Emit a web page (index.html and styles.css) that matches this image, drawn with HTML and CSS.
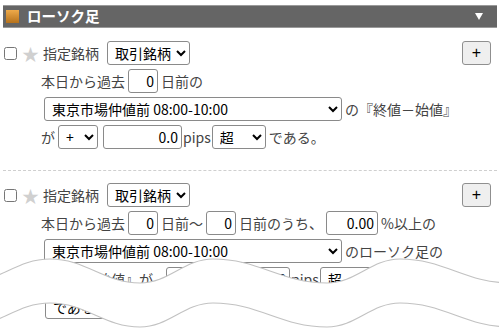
FILE: index.html
```html
<!DOCTYPE html>
<html lang="ja">
<head>
    <meta charset="UTF-8">
    <title>ローソク足</title>
    <link rel="stylesheet" href="styles.css">
</head>
<body>
    <div class="panel">
        <div class="panel-head">
            <span class="head-icon"></span>
            <h2>ローソク足</h2>
            <span class="head-toggle"></span>
        </div>

        <!-- rule 1 -->
        <div class="rule">
            <div class="row">
                <input type="checkbox" class="rule-check">
                <span class="star">★</span>
                <span class="label">指定銘柄</span>
                <select class="sel-symbol"><option>取引銘柄</option></select>
                <button class="add-btn">+</button>
            </div>
            <div class="row sub">
                <span>本日から過去</span>
                <input class="num w-days" value="0">
                <span>日前の</span>
            </div>
            <div class="row sub">
                <select class="sel-session"><option>東京市場仲値前 08:00-10:00</option></select>
                <span>の『終値－始値』</span>
            </div>
            <div class="row sub">
                <span>が</span>
                <select class="sel-sign"><option>+</option></select>
                <input class="num w-pips" value="0.0">
                <span class="unit">pips</span>
                <select class="sel-cmp"><option>超</option></select>
                <span>である。</span>
            </div>
        </div>

        <!-- rule 2 -->
        <div class="rule">
            <div class="row">
                <input type="checkbox" class="rule-check">
                <span class="star">★</span>
                <span class="label">指定銘柄</span>
                <select class="sel-symbol"><option>取引銘柄</option></select>
                <button class="add-btn">+</button>
            </div>
            <div class="row sub">
                <span>本日から過去</span>
                <input class="num w-days" value="0">
                <span>日前～</span>
                <input class="num w-days" value="0">
                <span>日前のうち、</span>
                <input class="num w-pct" value="0.00">
                <span>%以上の</span>
            </div>
            <div class="row sub">
                <select class="sel-session"><option>東京市場仲値前 08:00-10:00</option></select>
                <span>のローソク足の</span>
            </div>
            <div class="row sub">
                <span class="lead">『終値－始値』が</span>
                <input class="num w-pips-wide" value="0.0">
                <span class="unit">pips</span>
                <select class="sel-cmp"><option>超</option></select>
            </div>
            <div class="row sub">
                <select class="sel-tail"><option>である。</option></select>
            </div>
        </div>
    </div>

    <svg class="tear" width="499" height="331" viewBox="0 0 499 331">
        <path fill="#fff" d="M -35 283 C -1 283, 16 259, 50 259 C 86 259, 104 283, 140 283 C 169 283, 184 259, 213 259 C 259 259, 281 283, 327 283 C 356 283, 371 259, 400 259 C 444 259, 466 283, 510 283 L 510 327 C 466 327, 444 303, 400 303 C 371 303, 356 327, 327 327 C 281 327, 259 303, 213 303 C 184 303, 169 327, 140 327 C 104 327, 86 303, 50 303 C 16 303, -1 327, -35 327 Z"/>
        <path fill="none" stroke="#c2c2c2" stroke-width="1.2" d="M -35 283 C -1 283, 16 259, 50 259 C 86 259, 104 283, 140 283 C 169 283, 184 259, 213 259 C 259 259, 281 283, 327 283 C 356 283, 371 259, 400 259 C 444 259, 466 283, 510 283"/>
        <path fill="none" stroke="#c2c2c2" stroke-width="1.2" d="M -35 327 C -1 327, 16 303, 50 303 C 86 303, 104 327, 140 327 C 169 327, 184 303, 213 303 C 259 303, 281 327, 327 327 C 356 327, 371 303, 400 303 C 444 303, 466 327, 510 327"/>
    </svg>
</body>
</html>
```

FILE: styles.css
```css
* {
    box-sizing: border-box;
}

body {
    margin: 0;
    position: relative;
    height: 331px;
    overflow: hidden;
    background: #fff;
    color: #444;
    font-family: "Noto Sans CJK JP", "Noto Sans", sans-serif;
    font-size: 14px;
}

.panel {
    margin: 5px 2px 0 3px;
}

.panel-head {
    display: flex;
    align-items: center;
    height: 23px;
    padding-left: 3px;
    background: #656565;
    border-top: 1px solid #9a9a9a;
    border-bottom: 1px solid #9a9a9a;
}

.head-icon {
    width: 13px;
    height: 13px;
    margin-right: 8px;
    background: linear-gradient(#eeaa4a, #b6721c);
}

.panel-head h2 {
    margin: 0;
    color: #fff;
    font-size: 14.5px;
    font-weight: bold;
    line-height: 1;
}

.head-toggle {
    margin-left: auto;
    margin-right: 14px;
    width: 0;
    height: 0;
    border-left: 4px solid transparent;
    border-right: 4px solid transparent;
    border-top: 7px solid #fff;
}

.rule {
    padding: 13px 0 17px;
}

.rule + .rule {
    border-top: 1px dashed #cfcfcf;
    padding-top: 12px;
}

.row {
    display: flex;
    align-items: center;
    gap: 3px;
    height: 24px;
    margin-bottom: 4px;
    white-space: nowrap;
}

.row.sub {
    padding-left: 38px;
}

.rule-check {
    width: 13px;
    height: 13px;
    margin: 0 0 0 1px;
}

.star {
    margin-left: 2px;
    color: #d0d0d0;
    font-size: 17px;
    line-height: 1;
}

.label {
    margin-left: 1px;
}

select,
input.num {
    height: 24px;
    border: 1px solid #8a8a8a;
    border-radius: 3px;
    background: #fff;
    color: #000;
    font-family: inherit;
    font-size: 14px;
}

select {
    padding: 0 2px 0 3px;
}

input.num {
    padding: 0 3px;
    text-align: right;
}

.sel-symbol {
    width: 83px;
    margin-left: 5px;
}

.sel-session {
    width: 298px;
    margin-left: 3px;
}

.sel-sign {
    width: 40px;
}

.sel-cmp {
    width: 54px;
}

.sel-tail {
    width: 90px;
    margin-left: 4px;
}

.w-days {
    width: 30px;
}

.w-pips {
    width: 79px;
    margin-left: 2px;
}

.w-pct {
    width: 52px;
}

.w-pips-wide {
    width: 124px;
    margin-left: 10px;
}

.unit {
    margin: 0 -2px;
}

.add-btn {
    margin-left: auto;
    margin-right: 6px;
    width: 29px;
    height: 24px;
    padding: 0;
    border: 1px solid #8f8f8f;
    border-radius: 3px;
    background: #efefef;
    color: #000;
    font-size: 16px;
    line-height: 1;
}

.tear {
    position: absolute;
    top: 0;
    left: 0;
    pointer-events: none;
}
```
